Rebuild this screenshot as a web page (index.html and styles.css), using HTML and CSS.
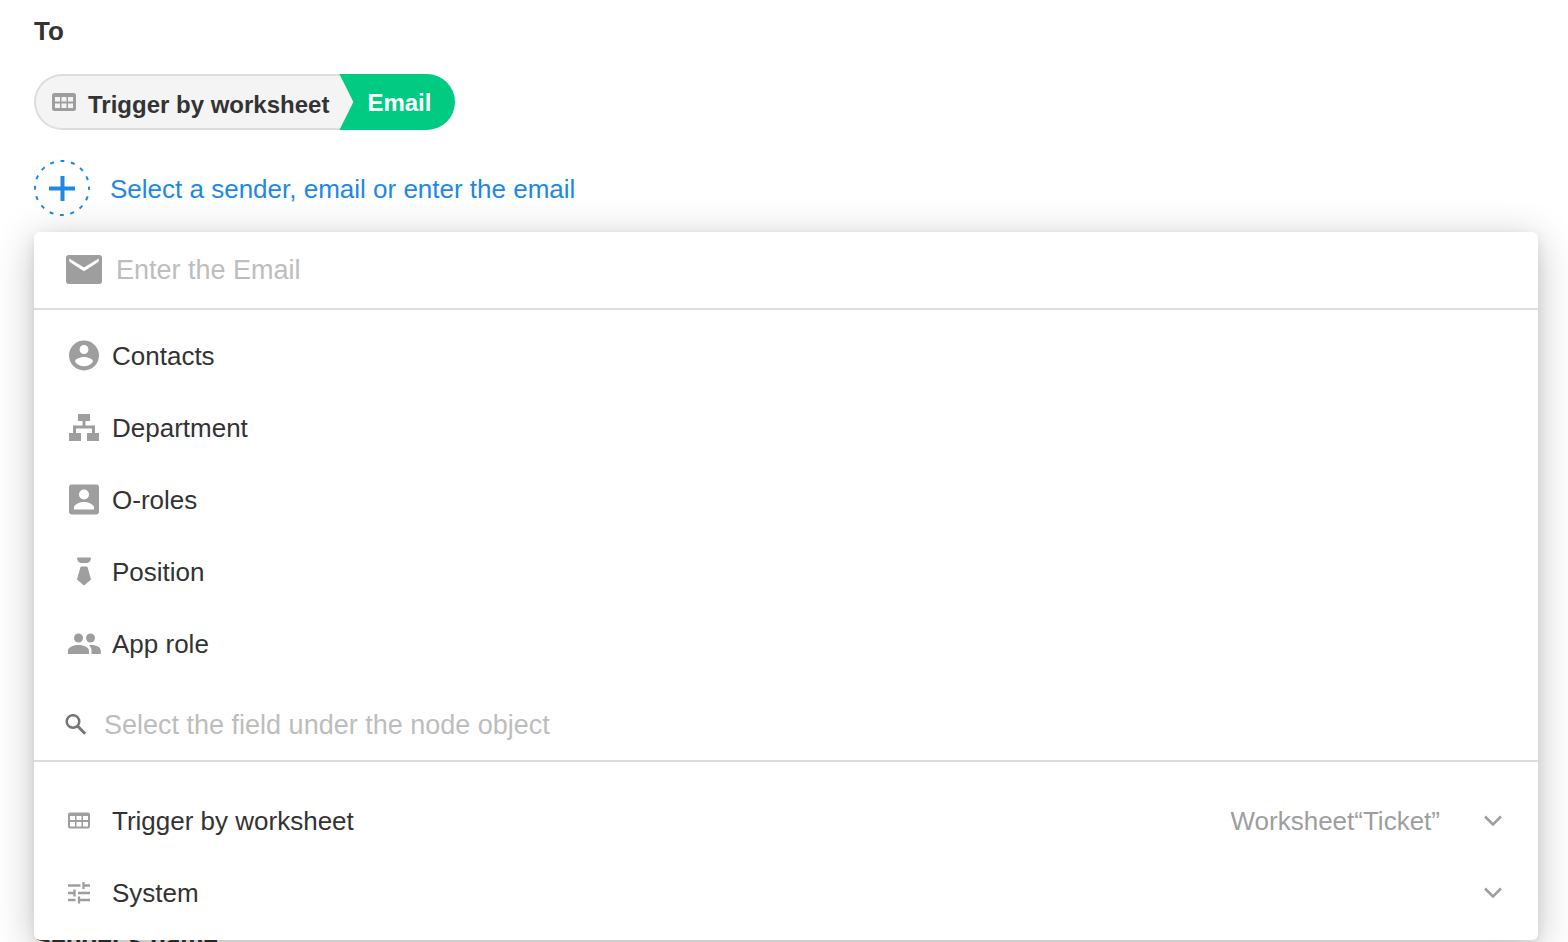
FILE: index.html
```html
<!DOCTYPE html>
<html lang="en">
<head>
<meta charset="UTF-8">
<meta name="viewport" content="width=device-width, initial-scale=1.0">
<title>Send Email</title>
<link rel="stylesheet" href="styles.css">
</head>
<body>
  <main class="form">
    <h2 class="form-label">To</h2>

    <div class="tag">
      <span class="tag-node">
        <svg class="icon-grid" viewBox="0 0 24 18"><path fill-rule="evenodd" d="M2.500 0h19A2.500 2.500 0 0 1 24 2.500v13a2.500 2.500 0 0 1-2.500 2.500h-19A2.500 2.500 0 0 1 0 15.500v-13A2.500 2.500 0 0 1 2.500 0zM3 4v4.500h5V4zM9.500 4v4.500h5V4zM16 4v4.500h5V4zM3 10.500V15h5v-4.500zM9.500 10.500V15h5v-4.500zM16 10.500V15h5v-4.500z"/></svg>
        <span class="tag-name">Trigger by worksheet</span>
      </span>
      <span class="tag-field">Email</span>
    </div>

    <div class="picker">
      <button type="button" class="add">
        <svg class="icon-add" viewBox="0 0 56 56">
          <circle cx="28" cy="28" r="27" fill="none" stroke="currentColor" stroke-width="2" stroke-dasharray="4 6.600" stroke-dashoffset="2"/>
          <path d="M15 28.500h26M28.500 16v25" stroke="currentColor" stroke-width="4"/>
        </svg>
        <span>Select a sender, email or enter the email</span>
      </button>

      <div class="menu">
        <label class="menu-input">
          <svg class="icon-mail" viewBox="0 0 36 30"><path fill-rule="evenodd" d="M3 0h30a3 3 0 0 1 3 3v23a3 3 0 0 1-3 3H3a3 3 0 0 1-3-3V3a3 3 0 0 1 3-3zM3.300 3.500v3.300L18 16.200l14.700-9.400V3.500L18 12.600z"/></svg>
          <input type="email" placeholder="Enter the Email" aria-label="Enter the Email">
        </label>

        <ul class="menu-list">
          <li><button type="button" class="menu-item">
            <svg class="icon" viewBox="0 0 36 36"><path fill-rule="evenodd" d="M18 2.500a15 15 0 1 0 0 30 15 15 0 0 0 0-30zm0 4.500a4.500 4.500 0 1 1 0 9 4.500 4.500 0 0 1 0-9zm0 21.300a10.800 10.800 0 0 1-9-4.800c0-3 6-4.600 9-4.600s9 1.600 9 4.600a10.800 10.800 0 0 1-9 4.800z"/></svg>
            <span>Contacts</span>
          </button></li>
          <li><button type="button" class="menu-item">
            <svg class="icon" viewBox="0 0 36 36"><path d="M12 4h12v7h-4.500v4.500H29V23h4v8H21v-8h5v-4.500H10V23h5v8H3v-8h4v-7.500h9.500V11H12z"/></svg>
            <span>Department</span>
          </button></li>
          <li><button type="button" class="menu-item">
            <svg class="icon" viewBox="0 0 36 36"><path fill-rule="evenodd" d="M6 2.500h24a3 3 0 0 1 3 3v24a3 3 0 0 1-3 3H6a3 3 0 0 1-3-3v-24a3 3 0 0 1 3-3zM18 7.500a5 5 0 1 0 0 10 5 5 0 0 0 0-10zM8 27.500h20v-2c0-3.500-6.500-5.500-10-5.500S8 22 8 25.500z"/></svg>
            <span>O-roles</span>
          </button></li>
          <li><button type="button" class="menu-item">
            <svg class="icon" viewBox="0 0 36 36"><path d="M12 3.500h12q1 0 1 1-.8 4-4 4.500h-6q-3.200-.5-4-4.500 0-1 1-1zM15.500 12.500h5q.8 0 1.100.8L25 25.500 18.700 31q-.7.600-1.400 0L11 25.500l3.400-12.200q.3-.8 1.100-.8z"/></svg>
            <span>Position</span>
          </button></li>
          <li><button type="button" class="menu-item">
            <svg class="icon" viewBox="0 0 36 36"><circle cx="12.500" cy="12" r="4.500"/><circle cx="24.500" cy="12" r="4.500"/><path d="M2 28v-3.500c0-3.700 6.800-5.500 10.500-5.500S23 20.800 23 24.500V28zM25.500 28v-3.500c0-2.300-1-4-2.700-5.300 4.200-.7 12 1 12 5.300V28z"/></svg>
            <span>App role</span>
          </button></li>
        </ul>

        <label class="menu-input menu-search">
          <svg class="icon-search" viewBox="0 0 22 22"><circle cx="8" cy="7.500" r="6.300" fill="none" stroke="currentColor" stroke-width="2.500"/><path d="M12.500 12l7.700 7.700" stroke="currentColor" stroke-width="3"/></svg>
          <input type="text" placeholder="Select the field under the node object" aria-label="Select the field under the node object">
        </label>

        <ul class="menu-list menu-nodes">
          <li><button type="button" class="menu-item">
            <svg class="icon-node" viewBox="0 0 24 24"><path fill-rule="evenodd" d="M3 3.500h18a2 2 0 0 1 2 2v12a2 2 0 0 1-2 2H3a2 2 0 0 1-2-2v-12a2 2 0 0 1 2-2zM3 7v4h5V7zM9.500 7v4h5V7zM16 7v4h5V7zM3 13v4.500h5V13zM9.500 13v4.500h5V13zM16 13v4.500h5V13z"/></svg>
            <span>Trigger by worksheet</span>
            <span class="menu-source">Worksheet“Ticket”</span>
            <svg class="icon-arrow" viewBox="0 0 20 12"><path d="M2 1.500l8 8 8-8" fill="none" stroke="currentColor" stroke-width="2.500"/></svg>
          </button></li>
          <li><button type="button" class="menu-item">
            <svg class="icon-node" viewBox="0 0 24 24"><path d="M1 4.500h12.500M16.500 4.500H23M16.500 1v7M1 12h6.500M7.500 8.500v7M11 12h12M1 19h7.500M12 19h11M12 15.500v7" fill="none" stroke="currentColor" stroke-width="2.300"/></svg>
            <span>System</span>
            <svg class="icon-arrow" viewBox="0 0 20 12"><path d="M2 1.500l8 8 8-8" fill="none" stroke="currentColor" stroke-width="2.500"/></svg>
          </button></li>
        </ul>
      </div>
    </div>

    <h2 class="form-label form-label-next">Sender's name</h2>
  </main>
</body>
</html>
```
FILE: styles.css
```css
* {
  box-sizing: border-box;
}

body {
  margin: 0;
  height: 100vh;
  overflow: hidden;
  background-color: #fff;
  color: #333;
  font-family: "Helvetica Neue", "Liberation Sans", Arial, sans-serif;
  font-size: 26px;
  line-height: 30px;
}

button,
input {
  padding: 0;
  border: none;
  background: none;
  color: inherit;
  font: inherit;
}

button {
  cursor: pointer;
}

svg {
  flex-shrink: 0;
  fill: currentColor;
}

.form {
  padding: 16px 30px 0 34px;
}

.form-label {
  margin: 0;
  font-size: 26px;
  font-weight: bold;
}

.form-label-next {
  margin-top: 709px;
}

/* selected recipient */
.tag {
  display: flex;
  width: fit-content;
  height: 56px;
  margin-top: 28px;
  font-size: 24px;
  font-weight: bold;
}

.tag-node {
  display: flex;
  align-items: center;
  gap: 12px;
  padding: 0 24px 0 16px;
  border: 2px solid #ddd;
  border-right: none;
  border-radius: 28px 0 0 28px;
  background-color: #f4f4f4;
}

.tag-name {
  padding-top: 6px;
}

.tag-field {
  display: flex;
  align-items: center;
  margin-left: -14px;
  padding: 2px 24px 0 28px;
  border-radius: 0 28px 28px 0;
  background-color: #01ca83;
  color: #fff;
  clip-path: polygon(0 0, 100% 0, 100% 100%, 0 100%, 14px 50%);
}

.icon-grid {
  width: 24px;
  height: 18px;
  color: #9e9e9e;
}

.picker {
  position: relative;
  margin-top: 30px;
}

.add {
  display: flex;
  align-items: center;
  gap: 20px;
  color: #1e88e5;
}

.add span {
  padding-top: 2px;
}

.icon-add {
  width: 56px;
  height: 56px;
}

/* dropdown */
.menu {
  position: absolute;
  top: 100%;
  left: 0;
  right: 0;
  margin-top: 16px;
  padding-bottom: 11px;
  border-radius: 6px;
  background-color: #fff;
  box-shadow: 0 8px 40px rgba(0, 0, 0, 0.24), 0 4px 12px rgba(0, 0, 0, 0.08);
}

.menu-input {
  display: flex;
  align-items: center;
  gap: 14px;
  height: 78px;
  padding: 0 32px;
  border-bottom: 2px solid #ddd;
}

.menu-input input {
  flex: 1;
  outline: none;
  font-size: 27px;
}

.menu-input input::placeholder {
  color: #bdbdbd;
  opacity: 1;
}

.menu-search {
  gap: 17px;
  height: 72px;
  padding: 0 31px;
}

.menu-list {
  margin: 0;
  padding: 10px 0;
  list-style: none;
}

.menu-nodes {
  padding: 23px 0 0;
}

.menu-item {
  display: flex;
  align-items: center;
  gap: 10px;
  width: 100%;
  height: 72px;
  padding: 0 35px 0 32px;
  text-align: left;
}

.menu-item:hover {
  background-color: #f5f5f5;
}

.menu-source {
  margin-left: auto;
  color: #9e9e9e;
}

.icon,
.icon-mail,
.icon-node,
.icon-arrow {
  color: #9e9e9e;
}

.icon {
  width: 36px;
  height: 36px;
}

.icon-mail {
  width: 36px;
  height: 30px;
}

.icon-search {
  width: 22px;
  height: 22px;
  color: #757575;
}

.icon-node {
  width: 24px;
  height: 24px;
  margin: 0 11px 0 1px;
}

.icon-arrow {
  width: 20px;
  height: 12px;
  margin-left: auto;
}

.menu-source + .icon-arrow {
  margin-left: 33px;
}
```
